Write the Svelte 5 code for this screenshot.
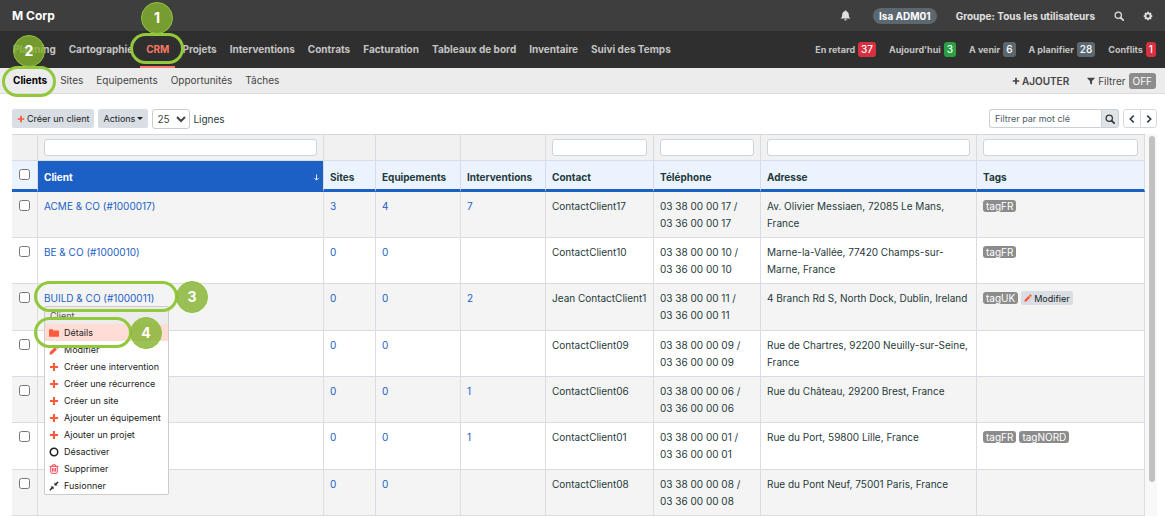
<script lang="ts">
  const navItems = [
    "Planning",
    "Cartographie",
    "CRM",
    "Projets",
    "Interventions",
    "Contrats",
    "Facturation",
    "Tableaux de bord",
    "Inventaire",
    "Suivi des Temps",
  ];

  const counters = [
    { label: "En retard", value: 37, color: "red" },
    { label: "Aujourd'hui", value: 3, color: "green" },
    { label: "A venir", value: 6, color: "gray" },
    { label: "A planifier", value: 28, color: "gray" },
    { label: "Conflits", value: 1, color: "red" },
  ];

  const subItems = ["Clients", "Sites", "Equipements", "Opportunités", "Tâches"];

  const columns = [
    { key: "sites", label: "Sites", filter: false },
    { key: "equipements", label: "Equipements", filter: false },
    { key: "interventions", label: "Interventions", filter: false },
    { key: "contact", label: "Contact", filter: true },
    { key: "telephone", label: "Téléphone", filter: true },
    { key: "adresse", label: "Adresse", filter: true },
    { key: "tags", label: "Tags", filter: true },
  ];

  const clients = [
    { name: "ACME & CO (#1000017)", counts: ["3", "4", "7"], contact: "ContactClient17", num: "17", address: "Av. Olivier Messiaen, 72085 Le Mans, France", tags: ["tagFR"] },
    { name: "BE & CO (#1000010)", counts: ["0", "0", ""], contact: "ContactClient10", num: "10", address: "Marne-la-Vallée, 77420 Champs-sur-Marne, France", tags: ["tagFR"] },
    { name: "BUILD & CO (#1000011)", counts: ["0", "0", "2"], contact: "Jean ContactClient1", num: "11", address: "4 Branch Rd S, North Dock, Dublin, Ireland", tags: ["tagUK"], open: true },
    { counts: ["0", "0", ""], contact: "ContactClient09", num: "09", address: "Rue de Chartres, 92200 Neuilly-sur-Seine, France", tags: [] },
    { counts: ["0", "0", "1"], contact: "ContactClient06", num: "06", address: "Rue du Château, 29200 Brest, France", tags: [] },
    { counts: ["0", "0", "1"], contact: "ContactClient01", num: "01", address: "Rue du Port, 59800 Lille, France", tags: ["tagFR", "tagNORD"] },
    { counts: ["0", "0", ""], contact: "ContactClient08", num: "08", address: "Rue du Pont Neuf, 75001 Paris, France", tags: [] },
  ];

  const menuItems = [
    { icon: "folder", label: "Détails" },
    { icon: "pencil", label: "Modifier" },
    { icon: "plus", label: "Créer une intervention" },
    { icon: "plus", label: "Créer une récurrence" },
    { icon: "plus", label: "Créer un site" },
    { icon: "plus", label: "Ajouter un équipement" },
    { icon: "plus", label: "Ajouter un projet" },
    { icon: "circle", label: "Désactiver" },
    { icon: "trash", label: "Supprimer" },
    { icon: "merge", label: "Fusionner" },
  ];

  let lines = $state("25");
  let keyword = $state("");
</script>

{#snippet icon(name: string)}
  <svg class="icon icon-{name}" viewBox="0 0 16 16" aria-hidden="true">
    {#if name === "bell"}
      <path d="M8 0.5c.7 0 1.1.5 1.1 1.2C11.500 2.300 12.800 4.200 12.800 6.500c0 3.500 1 4.700 2.700 6H.5c1.700-1.300 2.700-2.500 2.700-6C3.200 4.200 4.500 2.300 6.900 1.700 6.900 1 7.300.5 8 .5zM6 13.400h4a2 2 0 0 1-4 0z" />
    {:else if name === "search"}
      <circle cx="6.800" cy="6.800" r="5" fill="none" stroke="currentColor" stroke-width="2" />
      <path d="M10.500 10.500l4.200 4.200" stroke="currentColor" stroke-width="2.600" stroke-linecap="round" />
    {:else if name === "gear"}
      <circle cx="8" cy="8" r="4.200" fill="none" stroke="currentColor" stroke-width="3" />
      <path d="M8 1.200v3M8 11.800v3M1.200 8h3M11.800 8h3M3.200 3.200l2 2M10.800 10.800l2 2M3.200 12.800l2-2M10.800 5.200l2-2" stroke="currentColor" stroke-width="2.800" />
    {:else if name === "plus"}
      <path d="M6.300 1.500h3.400v4.800h4.800v3.400H9.700v4.800H6.300V9.700H1.500V6.300h4.800z" />
    {:else if name === "funnel"}
      <path d="M.8 1.500h14.400v1.300L10 8.200V15.300l-4-3V8.200L.8 2.800z" />
    {:else if name === "pencil"}
      <path d="M11.500 1.200a1.400 1.400 0 0 1 2 0l1.500 1.500a1.400 1.400 0 0 1 0 2L13.500 6.200 10 2.700zM9.200 3.500l3.500 3.500-7.900 7.900L.8 15.500l.6-4.200z" />
    {:else if name === "folder"}
      <path d="M0 3.300C0 2.500.6 2 1.300 2h3.900c.7 0 1.300.6 1.300 1.300v.6h8c.8 0 1.500.6 1.500 1.400v7.300c0 .8-.6 1.400-1.400 1.400H1.400C.6 14 0 13.400 0 12.600z" />
    {:else if name === "circle"}
      <circle cx="8" cy="8" r="6" fill="none" stroke="currentColor" stroke-width="2.400" />
    {:else if name === "trash"}
      <path d="M1 3.700h14M5 3.500L6 1.300h4l1 2.200M2.800 4v9.600c0 .8.5 1.300 1.200 1.300h8c.7 0 1.200-.5 1.200-1.300V4M5.700 6.500v5.700M8 6.500v5.700M10.300 6.500v5.700" fill="none" stroke="currentColor" stroke-width="1.400" />
    {:else if name === "merge"}
      <path d="M8.700 7.300V2.300l1.700 1.700L13.800.6l1.600 1.600L12 5.600l1.700 1.700zM7.300 8.700v5L5.600 12l-3.400 3.400-1.600-1.600L4 10.400 2.300 8.700z" />
    {:else if name === "left"}
      <path d="M10.800 2.500L5.300 8l5.500 5.500" fill="none" stroke="currentColor" stroke-width="2.600" />
    {:else if name === "right"}
      <path d="M5.200 2.500L10.700 8l-5.500 5.500" fill="none" stroke="currentColor" stroke-width="2.600" />
    {:else if name === "sort"}
      <path d="M8 1v13M3 9l5 5 5-5" fill="none" stroke="currentColor" stroke-width="2" />
    {/if}
  </svg>
{/snippet}

{#snippet step(n: number)}
  <span class="step step-{n}"><span class="bubble">{n}</span></span>
{/snippet}

<header class="topbar">
  <a class="brand" href="/">M Corp</a>
  <div class="user-zone">
    <button class="bell" aria-label="Notifications">{@render icon("bell")}</button>
    <a class="user" href="/profil">Isa ADM01</a>
    <a href="/groupe">Groupe: Tous les utilisateurs</a>
    <button aria-label="Rechercher">{@render icon("search")}</button>
    <button aria-label="Paramètres">{@render icon("gear")}</button>
  </div>
</header>

<nav class="mainnav">
  <div class="links">
    {#each navItems as item}
      <a href="#{item}" class:active={item === "CRM"}>
        {item}
        {#if item === "CRM"}{@render step(1)}{/if}
      </a>
    {/each}
  </div>
  <div class="counters">
    {#each counters as counter}
      <a href="#{counter.label}">{counter.label} <span class="count {counter.color}">{counter.value}</span></a>
    {/each}
  </div>
</nav>

<nav class="subnav">
  <div class="sublinks">
    {#each subItems as item}
      <a href="#{item}" class:active={item === "Clients"}>
        {item}
        {#if item === "Clients"}{@render step(2)}{/if}
      </a>
    {/each}
  </div>
  <button class="add">{@render icon("plus")} AJOUTER</button>
  <button class="filter">{@render icon("funnel")} Filtrer <span class="off">OFF</span></button>
</nav>

<main>
  <div class="toolbar">
    <button class="btn">{@render icon("plus")} Créer un client</button>
    <button class="btn">Actions <span class="caret"></span></button>
    <label class="lines">
      <select bind:value={lines}>
        <option>25</option>
        <option>50</option>
        <option>100</option>
      </select>
      Lignes
    </label>
    <form class="search" onsubmit={(e) => e.preventDefault()}>
      <input type="text" placeholder="Filtrer par mot clé" aria-label="Filtrer par mot clé" bind:value={keyword} />
      <button aria-label="Rechercher">{@render icon("search")}</button>
    </form>
    <div class="pager">
      <button aria-label="Page précédente">{@render icon("left")}</button>
      <button aria-label="Page suivante">{@render icon("right")}</button>
    </div>
  </div>

  <div class="grid">
    <table>
      <colgroup>
        <col class="col-check" />
        <col class="col-client" />
        {#each columns as col}
          <col class="col-{col.key}" />
        {/each}
      </colgroup>
      <thead>
        <tr class="filters">
          <td></td>
          <td><input type="text" aria-label="Filtrer Client" /></td>
          {#each columns as col}
            <td>
              {#if col.filter}<input type="text" aria-label="Filtrer {col.label}" />{/if}
            </td>
          {/each}
        </tr>
        <tr class="titles">
          <th class="check"><input type="checkbox" aria-label="Tout sélectionner" /></th>
          <th class="sorted"><div>Client {@render icon("sort")}</div></th>
          {#each columns as col}
            <th>{col.label}</th>
          {/each}
        </tr>
      </thead>
      <tbody>
        {#each clients as client}
          <tr>
            <td class="check"><input type="checkbox" aria-label={client.contact} /></td>
            <td>
              {#if client.name}
                <div class="client">
                  <a href="#{client.num}">{client.name}</a>
                  {#if client.open}
                    <div class="menu">
                      <div class="menu-title">Client</div>
                      {#each menuItems as item, i}
                        <button class="menu-item" class:selected={i === 0}>
                          {@render icon(item.icon)}
                          {item.label}
                          {#if i === 0}{@render step(4)}{/if}
                        </button>
                      {/each}
                    </div>
                    {@render step(3)}
                  {/if}
                </div>
              {/if}
            </td>
            {#each client.counts as count}
              <td>{#if count}<a href="#{client.num}">{count}</a>{/if}</td>
            {/each}
            <td class="contact">{client.contact}</td>
            <td>03 38 00 00 {client.num} /<br />03 36 00 00 {client.num}</td>
            <td>{client.address}</td>
            <td>
              <div class="tags">
                {#each client.tags as tag}
                  <span class="tag">{tag}</span>
                {/each}
                {#if client.open}
                  <button class="edit">{@render icon("pencil")} Modifier</button>
                {/if}
              </div>
            </td>
          </tr>
        {/each}
      </tbody>
    </table>
    <div class="scrollbar"><div class="thumb"></div></div>
  </div>
</main>

<style>
  :global(body) {
    margin: 0;
    background: #fff;
    color: #1f3a3a;
    font-family: Inter, "Liberation Sans", sans-serif;
    font-size: 10px;
    overflow: hidden;
  }

  a {
    color: inherit;
    text-decoration: none;
  }

  button,
  input,
  select {
    font: inherit;
    color: inherit;
    box-sizing: border-box;
    margin: 0;
  }

  button {
    display: inline-flex;
    align-items: center;
    padding: 0;
    border: none;
    background: none;
    cursor: pointer;
  }

  .icon {
    width: 10px;
    height: 10px;
    flex: none;
    fill: currentColor;
  }

  .topbar {
    display: flex;
    align-items: center;
    justify-content: space-between;
    height: 31px;
    padding: 0 12px;
    background: #3e3e3e;
    color: #e0e0e0;
    font-weight: 700;
  }

  .brand {
    color: #fff;
    font-size: 12px;
  }

  .user-zone {
    display: flex;
    align-items: center;
    gap: 19px;
  }

  .bell {
    margin-right: 3px;
  }

  .bell .icon {
    width: 11px;
    height: 11px;
  }

  .user {
    padding: 0 6px;
    border-radius: 8px;
    background: #5c6770;
    color: #fff;
    line-height: 16px;
  }

  .mainnav {
    display: flex;
    align-items: stretch;
    justify-content: space-between;
    height: 37px;
    padding: 0 9px 0 7px;
    background: #2f2f2f;
    color: #c4c4c4;
    font-weight: 700;
  }

  .links {
    display: flex;
    gap: 1px;
  }

  .links a {
    position: relative;
    padding: 0 6px;
    line-height: 37px;
    white-space: nowrap;
  }

  .links a.active {
    color: #fa7863;
    box-shadow: inset 0 -2px #fa7863;
  }

  .counters {
    display: flex;
    align-items: center;
    gap: 13px;
    font-size: 9px;
    white-space: nowrap;
  }

  .counters a {
    display: flex;
    align-items: center;
    gap: 3px;
  }

  .count {
    padding: 0 3px;
    border-radius: 3px;
    color: #fff;
    font-size: 10px;
    font-weight: 500;
    line-height: 15px;
  }

  .red {
    background: #d9303f;
  }

  .green {
    background: #2b9f43;
  }

  .gray {
    background: #5c6770;
  }

  .subnav {
    display: flex;
    align-items: center;
    height: 25px;
    padding: 0 9px 0 13px;
    border-bottom: 1px solid #dcdcdc;
    background: #ececec;
    color: #444;
  }

  .sublinks {
    display: flex;
    flex: 1;
    gap: 13px;
  }

  .sublinks a {
    position: relative;
    line-height: 25px;
  }

  .sublinks a.active {
    color: #000;
    font-weight: 700;
  }

  .add {
    gap: 2px;
    margin-right: 18px;
    font-weight: 600;
  }

  .add .icon,
  .filter .icon {
    width: 8px;
    height: 8px;
  }

  .filter {
    gap: 3px;
  }

  .off {
    padding: 0 4px;
    border-radius: 3px;
    background: #8c8c8c;
    color: #fff;
    line-height: 16px;
  }

  main {
    padding: 15px 8px 0 12px;
  }

  .toolbar {
    display: flex;
    gap: 4px;
    height: 19px;
  }

  .btn {
    gap: 2px;
    padding: 0 5px;
    border-radius: 2px;
    background: #d8dee3;
    color: #222;
    font-size: 9px;
  }

  .btn .icon-plus {
    width: 8px;
    height: 8px;
    color: #fc5a3c;
  }

  .caret {
    border: 3px solid transparent;
    border-top-color: currentColor;
    border-bottom: none;
  }

  .lines {
    display: flex;
    flex: 1;
    align-items: center;
    gap: 3px;
  }

  .lines select {
    width: 38px;
    height: 20px;
    border: 1px solid #ccc;
    border-radius: 3px;
    background: #fff;
    color: #444;
  }

  .search {
    display: flex;
  }

  .search input {
    width: 112px;
    padding: 0 5px;
    border: 1px solid #c8cfd6;
    border-right: none;
    border-radius: 3px 0 0 3px;
    font-size: 9px;
  }

  .search input::placeholder {
    color: #4e5a64;
  }

  .search button {
    justify-content: center;
    width: 18px;
    border: 1px solid #c8cfd6;
    border-radius: 0 3px 3px 0;
    background: #dfe4e9;
    color: #333;
  }

  .pager {
    display: flex;
    border: 1px solid #d5dade;
    border-radius: 3px;
  }

  .pager button {
    justify-content: center;
    width: 16px;
    color: #333f4a;
  }

  .pager button + button {
    border-left: 1px solid #d5dade;
  }

  .grid {
    display: flex;
    margin-top: 6px;
  }

  table {
    flex: 1;
    width: 0;
    border-collapse: separate;
    border-spacing: 0;
    border-top: 1px solid #d5d9dd;
    table-layout: fixed;
    line-height: 17px;
  }

  .col-check {
    width: 26px;
  }

  .col-sites {
    width: 52px;
  }

  .col-equipements,
  .col-interventions {
    width: 85px;
  }

  .col-contact {
    width: 108px;
  }

  .col-telephone {
    width: 107px;
  }

  .col-adresse {
    width: 216px;
  }

  .col-tags {
    width: 168px;
  }

  td,
  th {
    box-sizing: border-box;
    padding: 6px 6px 5px;
    border-right: 1px solid #d8dde3;
    border-bottom: 1px solid #d8dde3;
    text-align: left;
    vertical-align: top;
  }

  .filters td {
    height: 26px;
    padding: 4px 6px;
    background: #f1f1f1;
  }

  .filters input {
    display: block;
    width: 100%;
    height: 17px;
    border: 1px solid #ccd4dc;
    border-radius: 3px;
    background: #fff;
  }

  .titles th {
    height: 31px;
    padding: 8px 6px 3px;
    border-bottom: 3px solid #1c5fc5;
    background: #ebf3fe;
    font-weight: 700;
  }

  .titles .sorted {
    padding-right: 3px;
    background: #1c5fc5;
    color: #fff;
  }

  .sorted div {
    display: flex;
    align-items: center;
    justify-content: space-between;
  }

  .icon-sort {
    width: 7px;
    height: 7px;
  }

  tbody td {
    height: 46px;
  }

  tbody tr:nth-child(3n) td {
    height: 47px;
  }

  tbody tr:nth-child(odd) {
    background: #f4f4f4;
  }

  td a {
    color: #1c5fc5;
  }

  .contact {
    white-space: nowrap;
  }

  .titles .check,
  td.check {
    padding: 8px 6px 0;
  }

  .check input {
    display: block;
    width: 11px;
    height: 11px;
    margin-left: 1px;
  }

  .client {
    position: relative;
  }

  .tags {
    display: flex;
    align-items: center;
    gap: 3px;
    height: 16px;
  }

  .tag {
    padding: 0 3px;
    border-radius: 3px;
    background: #8c8c8c;
    color: #fff;
    line-height: 12px;
  }

  .edit {
    gap: 2px;
    height: 14px;
    padding: 0 3px;
    border-radius: 2px;
    background: #d8dee3;
    color: #222;
    font-size: 9px;
  }

  .icon-pencil,
  .icon-folder,
  .menu .icon-plus {
    color: #fc5a3c;
  }

  .edit .icon {
    width: 8px;
    height: 8px;
  }

  .menu {
    position: absolute;
    top: 16px;
    left: 0;
    z-index: 2;
    width: 123px;
    border: 1px solid #ccc;
    border-radius: 2px;
    background: #fff;
    color: #222;
    font-size: 9px;
  }

  .menu-title {
    padding-left: 5px;
    background: #ececec;
    color: #555;
    line-height: 17px;
  }

  .menu-item {
    position: relative;
    display: flex;
    gap: 5px;
    width: 100%;
    height: 17px;
    padding: 0 4px;
    white-space: nowrap;
  }

  .selected {
    background: #ffdcd6;
  }

  .icon-trash {
    color: #ee2b3b;
  }

  .step {
    position: absolute;
    z-index: 3;
    box-sizing: border-box;
    height: 31px;
    border: 3px solid #93c83d;
    border-radius: 16px;
  }

  .bubble {
    position: absolute;
    box-sizing: border-box;
    width: 32px;
    height: 32px;
    border: 1px solid #8fc43c;
    border-radius: 50%;
    background: rgba(133, 179, 48, 0.81);
    color: #fff;
    font-size: 14px;
    font-weight: 700;
    line-height: 30px;
    text-align: center;
  }

  .step-1 {
    top: 2px;
    left: -10px;
    right: -9px;
  }

  .step-2 {
    top: -2px;
    left: -11px;
    right: -9px;
  }

  .step-3 {
    top: -9px;
    left: -10px;
    width: 144px;
  }

  .step-4 {
    top: -7px;
    left: -11px;
    width: 98px;
  }

  .step-1 .bubble,
  .step-2 .bubble {
    bottom: 27px;
    left: 8px;
  }

  .step-3 .bubble,
  .step-4 .bubble {
    top: -3px;
    left: 100%;
    margin-left: 1px;
  }

  .scrollbar {
    box-sizing: border-box;
    width: 12px;
    padding: 2px 2px 0 4px;
    background: #f8f8f8;
  }

  .thumb {
    height: 91%;
    border-radius: 3px;
    background: #c1c1c1;
  }
</style>
